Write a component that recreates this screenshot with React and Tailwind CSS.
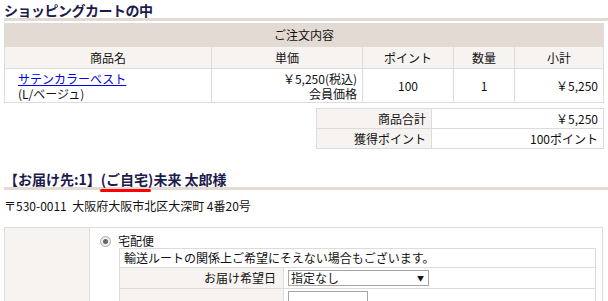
import React from "react";

const cell = "border border-[#dcdcdc] px-[5px] align-middle";

function App() {
  return (
    <div className="w-[608px] h-[301px] overflow-hidden bg-white pl-[4px] pt-[3px] font-['Noto_Sans_CJK_JP','Noto_Sans',sans-serif] text-[12px] leading-[14px] text-[#111]">
      {/* heading */}
      <h2 className="border-b-[3px] border-[#e3dbd3] pb-[1px] text-[14px] font-bold leading-[14px] tracking-[-0.5px] text-[#1b1b4d]">
        ショッピングカートの中
      </h2>

      {/* cart table */}
      <table className="mt-[2px] w-[600px] border-collapse">
        <thead>
          <tr className="h-[23px] bg-[#e3dbd3]">
            <th colSpan={5} className={`${cell} font-normal`}>ご注文内容</th>
          </tr>
          <tr className="h-[22px] bg-[#f6f3f0]">
            <th className={`${cell} w-[207px] font-normal`}>商品名</th>
            <th className={`${cell} w-[151px] font-normal`}>単価</th>
            <th className={`${cell} w-[91px] font-normal`}>ポイント</th>
            <th className={`${cell} w-[61px] font-normal`}>数量</th>
            <th className={`${cell} font-normal`}>小計</th>
          </tr>
        </thead>
        <tbody>
          <tr className="h-[34px]">
            <td className={`${cell} pl-[13px] leading-[15px]`}>
              <a href="#" className="text-[#0000ee] underline">サテンカラーベスト</a>
              <br />
              (L/ベージュ)
            </td>
            <td className={`${cell} text-right leading-[15px]`}>
              ￥5,250(税込)
              <br />
              会員価格
            </td>
            <td className={`${cell} text-center`}>100</td>
            <td className={`${cell} text-center`}>1</td>
            <td className={`${cell} text-right`}>￥5,250</td>
          </tr>
        </tbody>
      </table>

      {/* summary */}
      <table className="ml-[312px] mt-[5px] w-[288px] border-collapse">
        <tbody>
          <tr className="h-[20px]">
            <td className={`${cell} w-[115px] bg-[#f6f3f0] text-right`}>商品合計</td>
            <td className={`${cell} text-right`}>￥5,250</td>
          </tr>
          <tr className="h-[20px]">
            <td className={`${cell} bg-[#f6f3f0] text-right`}>獲得ポイント</td>
            <td className={`${cell} text-right`}>100ポイント</td>
          </tr>
        </tbody>
      </table>

      {/* delivery heading */}
      <h2 className="relative mt-[23px] border-b-[3px] border-[#e3dbd3] pb-[1px] text-[14px] font-bold leading-[14px] text-[#1b1b4d]">
        【お届け先:1】(ご自宅)未来 太郎様
        <span className="absolute left-[96px] top-[17px] h-[3px] w-[51px] rounded-full bg-[#ff0000]" />
      </h2>

      <p className="mt-[9px] leading-[14px]">〒530-0011&nbsp;&nbsp;大阪府大阪市北区大深町 4番20号</p>

      {/* delivery method */}
      <table className="mt-[14px] w-[599px] border-collapse">
        <tbody>
          <tr>
            <td className="w-[85px] border border-[#dcdcdc] bg-[#f6f3f0]" />
            <td className="border border-[#dcdcdc] pl-[10px] pr-[4px] pt-[6px] align-top">
              <div className="flex items-center gap-[7px] leading-[14px]">
                <span className="flex h-[11px] w-[11px] items-center justify-center rounded-full border border-[#a8a8a8] bg-[#f0f0f0]">
                  <span className="h-[5px] w-[5px] rounded-full bg-[#666]" />
                </span>
                宅配便
              </div>
              <table className="ml-[19px] w-[477px] border-collapse">
                <tbody>
                  <tr className="h-[19px]">
                    <td colSpan={2} className="border border-[#dcdcdc] px-[4px]">
                      輸送ルートの関係上ご希望にそえない場合もございます。
                    </td>
                  </tr>
                  <tr className="h-[21px]">
                    <td className="w-[164px] border border-[#dcdcdc] bg-[#f6f3f0] pr-[7px] text-right">お届け希望日</td>
                    <td className="border border-[#dcdcdc] px-[4px]">
                      <div className="flex h-[16px] w-[141px] items-center justify-between border border-[#a5a5a5] bg-white pl-[2px] pr-[4px]">
                        <span>指定なし</span>
                        <span className="text-[7px] leading-[7px]">▼</span>
                      </div>
                    </td>
                  </tr>
                  <tr className="h-[21px]">
                    <td className="border border-[#dcdcdc] bg-[#f6f3f0]" />
                    <td className="border border-[#dcdcdc] px-[4px] align-top pt-[2px]">
                      <div className="h-[16px] w-[80px] border border-[#a5a5a5] bg-white" />
                    </td>
                  </tr>
                </tbody>
              </table>
            </td>
          </tr>
        </tbody>
      </table>
    </div>
  );
}

export default App;
